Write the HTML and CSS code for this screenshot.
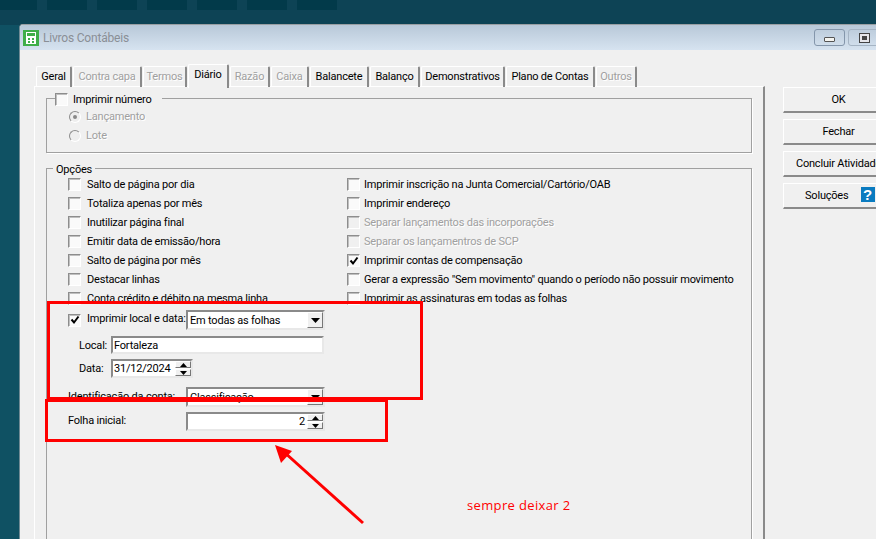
FILE: index.html
```html
<!DOCTYPE html>
<html lang="pt">
<head>
<meta charset="utf-8">
<title>Livros Contábeis</title>
<link rel="stylesheet" href="styles.css">
</head>
<body>
<div class="taskstrip"><span></span><span></span><span></span><span></span><span></span><span></span><span></span></div>
<div class="desk-left"></div>
<section class="window">
  <header class="titlebar">
    <svg class="appicon" width="16" height="16" viewBox="0 0 16 16"><rect width="16" height="16" fill="#3fae49"/><rect x="3" y="2" width="10" height="12" fill="#fff"/><rect x="4" y="3" width="8" height="3" fill="#3fae49"/><rect x="5" y="8" width="2" height="2" fill="#3fae49"/><rect x="9" y="8" width="2" height="2" fill="#3fae49"/><rect x="5" y="11" width="2" height="2" fill="#3fae49"/><rect x="9" y="11" width="2" height="2" fill="#3fae49"/></svg>
    <span class="title">Livros Contábeis</span>
    <div class="wincontrols">
      <button class="winbtn wb-min"><i class="glyph-min"></i></button>
      <button class="winbtn wb-max"><i class="glyph-max"></i></button>
    </div>
  </header>
  <div class="client">
    <div class="main">
      <nav class="tabs">
        <span class="tab">Geral</span>
        <span class="tab off">Contra capa</span>
        <span class="tab off">Termos</span>
        <span class="tab active">Diário</span>
        <span class="tab off">Razão</span>
        <span class="tab off">Caixa</span>
        <span class="tab">Balancete</span>
        <span class="tab">Balanço</span>
        <span class="tab">Demonstrativos</span>
        <span class="tab">Plano de Contas</span>
        <span class="tab off">Outros</span>
      </nav>
      <div class="panel">
        <fieldset class="group numero">
          <div class="legend legend-check"><i class="box"></i><span>Imprimir número</span></div>
          <div class="radio off"><i class="dot on"></i><span>Lançamento</span></div>
          <div class="radio off"><i class="dot"></i><span>Lote</span></div>
        </fieldset>
        <fieldset class="group opcoes">
          <div class="legend legend-text">Opções</div>
          <div class="cols">
            <div class="col col-l">
              <label class="row"><i class="box"></i><span>Salto de página por dia</span></label>
              <label class="row"><i class="box"></i><span>Totaliza apenas por mês</span></label>
              <label class="row"><i class="box"></i><span>Inutilizar página final</span></label>
              <label class="row"><i class="box"></i><span>Emitir data de emissão/hora</span></label>
              <label class="row"><i class="box"></i><span>Salto de página por mês</span></label>
              <label class="row"><i class="box"></i><span>Destacar linhas</span></label>
              <label class="row"><i class="box"></i><span>Conta crédito e débito na mesma linha</span></label>
              <div class="form-row fr-print">
                <i class="box"><svg width="10" height="10" viewBox="0 0 10 10"><path d="M1.5 4.5 L4 7.5 L8.5 1.5" fill="none" stroke="#000" stroke-width="2"/></svg></i>
                <span class="fr-label">Imprimir local e data:</span>
                <div class="field combo"><span class="val">Em todas as folhas</span><b class="drop"><svg width="9" height="5" viewBox="0 0 9 5"><path d="M0 0H9L4.5 5Z"/></svg></b></div>
              </div>
              <div class="form-row fr-local">
                <span class="short">Local:</span>
                <div class="field text-local"><span class="val">Fortaleza</span></div>
              </div>
              <div class="form-row fr-data">
                <span class="short">Data:</span>
                <div class="field date"><span class="val">31/12/2024</span><b class="spin"><em><svg width="7" height="4" viewBox="0 0 7 4"><path d="M0 4H7L3.5 0Z"/></svg></em><em><svg width="7" height="4" viewBox="0 0 7 4"><path d="M0 0H7L3.5 4Z"/></svg></em></b></div>
              </div>
              <div class="form-row fr-ident">
                <span class="fr-label2">Identificação da conta:</span>
                <div class="field combo"><span class="val">Classificação</span><b class="drop"><svg width="9" height="5" viewBox="0 0 9 5"><path d="M0 0H9L4.5 5Z"/></svg></b></div>
              </div>
              <div class="form-row fr-folha">
                <span class="fr-label3">Folha inicial:</span>
                <div class="field number"><span class="val">2</span><b class="spin"><em><svg width="7" height="4" viewBox="0 0 7 4"><path d="M0 4H7L3.5 0Z"/></svg></em><em><svg width="7" height="4" viewBox="0 0 7 4"><path d="M0 0H7L3.5 4Z"/></svg></em></b></div>
              </div>
            </div>
            <div class="col col-r">
              <label class="row"><i class="box"></i><span>Imprimir inscrição na Junta Comercial/Cartório/OAB</span></label>
              <label class="row"><i class="box"></i><span>Imprimir endereço</span></label>
              <label class="row off"><i class="box"></i><span>Separar lançamentos das incorporações</span></label>
              <label class="row off"><i class="box"></i><span>Separar os lançamentros de SCP</span></label>
              <label class="row"><i class="box"><svg width="10" height="10" viewBox="0 0 10 10"><path d="M1.5 4.5 L4 7.5 L8.5 1.5" fill="none" stroke="#000" stroke-width="2"/></svg></i><span>Imprimir contas de compensação</span></label>
              <label class="row"><i class="box"></i><span>Gerar a expressão "Sem movimento" quando o período não possuir movimento</span></label>
              <label class="row"><i class="box"></i><span>Imprimir as assinaturas em todas as folhas</span></label>
            </div>
          </div>
          <div class="mark mark-a"></div>
          <div class="mark mark-b"></div>
        </fieldset>
      </div>
    </div>
    <aside class="actions">
      <button class="act">OK</button>
      <button class="act">Fechar</button>
      <button class="act">Concluir Atividade</button>
      <button class="act act-help"><span>Soluções</span><b class="help">?</b></button>
    </aside>
  </div>
</section>
<svg class="arrow" width="100" height="85" viewBox="0 0 100 85"><path d="M93 79 L14 8" stroke="#f00" stroke-width="3" fill="none"/><path d="M5 1 L22 7 L11 19Z" fill="#f00"/></svg>
<div class="note">sempre deixar 2</div>
</body>
</html>
```
FILE: styles.css
```css
* { box-sizing: border-box; }
html, body { margin: 0; height: 100%; }
body {
  position: relative;
  width: 876px;
  height: 539px;
  overflow: hidden;
  background: #0d4355;
  font: 11px Roboto, "Liberation Sans", Arial, sans-serif;
  letter-spacing: -.2px;
  color: #000;
}
i, em, b { font-style: normal; font-weight: normal; }

.taskstrip { display: flex; gap: 10px; height: 10px; margin-left: -3px; }
.taskstrip span { width: 40px; background: #023a4a; }
.desk-left { position: absolute; left: 0; top: 25px; width: 19px; height: 514px; background: #0f5163; }

.window {
  position: absolute; left: 19px; top: 24px; width: 900px; height: 540px;
  background: #f0f0f0; border-top: 1px solid #9a9fa3; border-left: 1px solid #6f8a94; border-radius: 4px 0 0 0;
  overflow: hidden;
}
.titlebar {
  display: flex; align-items: center; height: 25px; padding-left: 3px;
  background: linear-gradient(#b8c8d8, #d6e3f0);
}
.title { margin-left: 4px; font-size: 12px; color: #8a8f96; }
.wincontrols { position: absolute; left: 794px; top: 4px; display: flex; gap: 3px; }
.winbtn {
  display: flex; align-items: center; justify-content: center; height: 17px; padding: 0;
  background: transparent; border: 1px solid #8496ab; border-radius: 3px;
}
.wb-min { width: 31px; }
.wb-max { width: 32px; border-color: #a5b4c4; }
.glyph-min { width: 11px; height: 5px; border: 1px solid #555; background: #f4f4f0; margin-top: 3px; border-radius: 1px; }
.glyph-max { width: 11px; height: 10px; border: 1px solid #444; background: #444; background-clip: content-box; padding: 2px 2px; box-shadow: inset 0 0 0 2px #e6e6ea; }

.client { display: flex; padding: 13px 0 0 14px; }
.main { width: 731px; flex: none; }
.tabs {
  display: grid; height: 23px; padding-left: 2px; align-items: end;
  grid-template-columns: 37px 70px 45px 42px 41px 39px 60px 51px 85px 90px 42px;
}
.tab {
  display: flex; align-items: center; justify-content: center; height: 21px; margin-right: 1px; padding-bottom: 1px;
  border-top: 1px solid #fff; border-left: 1px solid #fff; border-right: 2px solid #8a8a8a;
  border-radius: 2px 2px 0 0;
}
.tab.off { color: #a0a0a0; text-shadow: 1px 1px 0 #fff; }
.tab.active {
  position: relative; top: 1px; z-index: 1; height: 24px; padding-bottom: 4px; background: #f0f0f0;
}
.panel {
  height: 460px; padding: 11px 11px 0 11px;
  border-top: 1px solid #fff; border-left: 1px solid #fff; border-right: 2px solid #8a8a8a;
}

.group { position: relative; margin: 0; padding: 0; border: 1px solid #a0a0a0; box-shadow: 1px 1px 0 #fff; min-width: 0; }
.numero { width: 706px; height: 55px; padding: 8px 0 0 22px; }
.opcoes { width: 706px; height: 400px; margin-top: 15px; padding: 6px 0 0 21px; }
.legend { position: absolute; background: #f0f0f0; display: flex; align-items: center; height: 14px; }
.legend-check { left: 8px; top: -7px; width: 107px; gap: 5px; }
.legend-text { left: 6px; top: -7px; padding: 0 3px; }

.box {
  flex: none; display: flex; align-items: center; justify-content: center;
  width: 13px; height: 13px; background: #fafafa;
  border: 1px solid; border-color: #8d8d8d #fff #fff #8d8d8d; box-shadow: inset 1px 1px 0 #bfbfbf;
}
.dot {
  flex: none; position: relative; width: 12px; height: 12px; border-radius: 50%;
  border: 1px solid; border-color: #8d8d8d #fff #fff #8d8d8d; background: #eee;
}
.dot.on::after { content: ""; position: absolute; left: 3px; top: 3px; width: 4px; height: 4px; border-radius: 50%; background: #888; }
.radio { display: flex; align-items: center; gap: 5px; height: 19px; }
.off { color: #a0a0a0; text-shadow: 1px 1px 0 #fff; }
.off .box { background: #f0f0f0; }

.cols { display: flex; }
.col { display: flex; flex-direction: column; }
.col-l { width: 279px; flex: none; }
.row { display: flex; align-items: center; gap: 6px; height: 19px; white-space: nowrap; }
.col-r .row { gap: 4px; }

.mark { position: absolute; border: 3px solid #f00; z-index: 2; }
.mark-a { left: 0; top: 132px; width: 376px; height: 99px; }
.mark-b { left: -2px; top: 230px; width: 343px; height: 43px; }
.form-row { display: flex; align-items: center; white-space: nowrap; }
.fr-print { height: 20px; margin-top: 2px; }
.fr-print .box { margin-right: 6px; }
.fr-label { width: 99px; padding-bottom: 3px; }
.fr-local { height: 18px; margin-top: 6px; margin-left: 11px; }
.fr-data { height: 19px; margin-top: 5px; margin-left: 11px; }
.short { width: 32px; }
.fr-ident { height: 20px; margin-top: 9px; }
.fr-folha { height: 19px; margin-top: 5px; }
.fr-label2 { width: 118px; padding-bottom: 1px; }
.fr-label3 { width: 118px; padding-bottom: 2px; }

.field {
  display: flex; align-items: center; background: #fff; height: 100%;
  border: 2px solid; border-color: #8a8a8a #e8e8e8 #e8e8e8 #8a8a8a; padding-left: 1px;
}
.val { flex: 1; min-width: 0; }
.combo { width: 139px; padding-left: 2px; flex: none; }
.text-local { width: 213px; }
.date { width: 82px; }
.number { width: 139px; height: 19px; flex: none; }
.number .val { text-align: right; padding-right: 2px; }
.drop {
  display: flex; align-items: center; justify-content: center; width: 16px; height: 16px; background: #f0f0f0;
  border: 1px solid; border-color: #fff #777 #777 #fff;
}
.spin { display: flex; flex-direction: column; width: 16px; height: 15px; gap: 1px; }
.spin em {
  flex: 1; display: flex; align-items: center; justify-content: center; background: #f0f0f0;
  border: 1px solid; border-color: #fff #777 #777 #fff;
}

.actions { display: flex; flex-direction: column; gap: 6px; width: 112px; margin: 24px 0 0 18px; flex: none; }
.act {
  display: flex; align-items: center; justify-content: center; height: 26px; padding: 0; font: inherit; letter-spacing: inherit; color: #000; white-space: nowrap;
  background: #f0f0f0; border: 1px solid; border-width: 1px 2px 2px 1px; border-color: #fff #8a8a8a #8a8a8a #fff;
}
.act-help { gap: 12px; justify-content: flex-start; padding-left: 21px; }
.help {
  display: block; width: 14px; height: 15px; margin-bottom: 2px; background: #0a7bc0; color: #fff;
  font: bold 15px/15px "Liberation Sans", sans-serif; text-align: center;
}

.arrow { position: absolute; left: 270px; top: 444px; z-index: 3; }
.note {
  position: absolute; left: 467px; top: 496px; z-index: 3; color: #f00;
  font: 13px "Open Sans", sans-serif; letter-spacing: .35px;
}
```
